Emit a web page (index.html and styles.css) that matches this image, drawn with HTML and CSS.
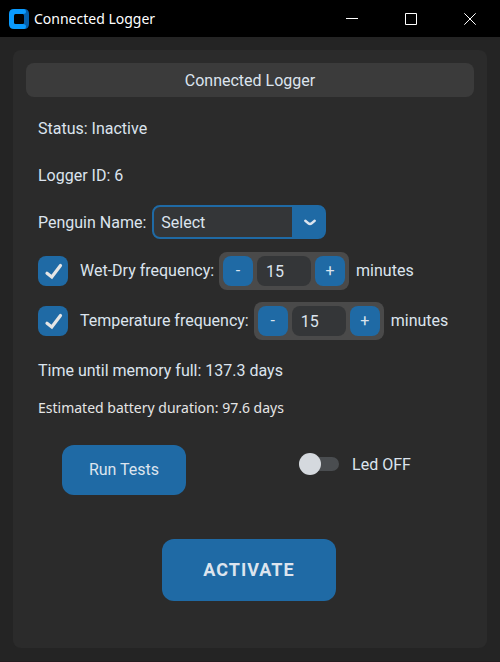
FILE: index.html
```html
<!DOCTYPE html>
<html lang="en">
<head>
<meta charset="utf-8">
<meta name="viewport" content="width=device-width, initial-scale=1">
<title>Connected Logger</title>
<link rel="stylesheet" href="styles.css">
</head>
<body>
<header class="titlebar">
  <svg class="app-icon" width="20" height="20" viewBox="0 0 20 20" aria-hidden="true">
    <path fill="#0560ac" d="M14 0H15Q20 0 20 5V15Q20 20 15 20H14Z"/>
    <path fill="#0a9bff" d="M5 0H15Q17 0 17 2.500T14 5H5ZM5 20H15Q17 20 17 17.500T14 15H5Z"/>
    <path fill="#0a9bff" d="M5 0H8V20H5Q0 20 0 15V5Q0 0 5 0Z"/>
    <rect x="5" y="5" width="10" height="10" rx="1.500" fill="#000"/>
  </svg>
  <span class="titlebar-text">Connected Logger</span>
  <div class="window-buttons">
    <button type="button" aria-label="Minimize"><svg width="12" height="12" viewBox="0 0 12 12"><path d="M0 5.500H12"/></svg></button>
    <button type="button" aria-label="Maximize"><svg width="12" height="12" viewBox="0 0 12 12"><path d="M.5 .5H11.500V11.500H.5Z"/></svg></button>
    <button type="button" aria-label="Close"><svg width="12" height="12" viewBox="0 0 12 12"><path d="M.3 .3L11.700 11.700M11.700 .3L.3 11.700"/></svg></button>
  </div>
</header>
<main class="panel">
  <h1 class="heading">Connected Logger</h1>
  <form class="settings">
    <p class="status">Status: Inactive</p>
    <p class="logger-id">Logger ID: 6</p>
    <div class="row penguin">
      <label for="penguin">Penguin Name:</label>
      <div class="select-box">
        <select id="penguin"><option>Select</option></select>
        <svg class="chevron" width="12" height="7" viewBox="0 0 12 7" aria-hidden="true"><path d="M1.300 1.800L4.300 4.200Q6 5.600 7.700 4.200L10.700 1.800"/></svg>
      </div>
    </div>
    <div class="row frequency">
      <input class="check" type="checkbox" id="wet" checked>
      <label for="wet">Wet-Dry frequency:</label>
      <div class="stepper">
        <button type="button" aria-label="Decrease wet-dry frequency">-</button>
        <input type="text" value="15" aria-label="Wet-Dry frequency in minutes">
        <button type="button" aria-label="Increase wet-dry frequency">+</button>
      </div>
      <span>minutes</span>
    </div>
    <div class="row frequency">
      <input class="check" type="checkbox" id="temp" checked>
      <label for="temp">Temperature frequency:</label>
      <div class="stepper">
        <button type="button" aria-label="Decrease temperature frequency">-</button>
        <input type="text" value="15" aria-label="Temperature frequency in minutes">
        <button type="button" aria-label="Increase temperature frequency">+</button>
      </div>
      <span>minutes</span>
    </div>
    <p class="memory">Time until memory full: 137.3 days</p>
    <p class="battery">Estimated battery duration: 97.6 days</p>
  </form>
  <div class="actions">
    <button type="button" class="run">Run Tests</button>
    <div class="led">
      <input class="switch" type="checkbox" role="switch" id="led">
      <label for="led">Led OFF</label>
    </div>
  </div>
  <button type="button" class="activate">ACTIVATE</button>
</main>
</body>
</html>
```
FILE: styles.css
```css
* {
  box-sizing: border-box;
}

body {
  margin: 0;
  min-height: 100vh;
  display: flex;
  flex-direction: column;
  background: #242424;
  border-bottom: 1px solid #241c20;
  color: #dce4ee;
  font: 16px/20px Roboto, "Liberation Sans", sans-serif;
}

h1, p {
  margin: 0;
  font-size: 16px;
  font-weight: 400;
}

button, input, select {
  margin: 0;
  padding: 0;
  border: 0;
  color: inherit;
  font: inherit;
}

.titlebar {
  display: flex;
  align-items: center;
  height: 37px;
  padding: 0 1px 0 9px;
  background: #000;
  color: #fff;
}

.titlebar-text {
  margin-left: 5px;
  font: 14px/20px "Noto Sans", "Open Sans", sans-serif;
}

.window-buttons {
  display: flex;
  margin-left: auto;
}

.window-buttons button {
  display: flex;
  align-items: center;
  justify-content: center;
  width: 59px;
  height: 36px;
  background: none;
}

.window-buttons path {
  fill: none;
  stroke: #fff;
}

.panel {
  flex: 1;
  display: flex;
  flex-direction: column;
  margin: 13px;
  padding: 13px;
  border-radius: 8px;
  background: #2b2b2b;
}

.heading {
  padding: 8px 8px 6px;
  border-radius: 8px;
  background: #3b3b3b;
  text-align: center;
}

.settings {
  padding: 22px 12px 0;
}

.logger-id {
  margin-top: 27px;
}

.row {
  display: flex;
  align-items: center;
}

.penguin {
  gap: 6px;
  margin: 19px 0 13px;
}

.select-box {
  display: grid;
  width: 174px;
  height: 34px;
}

.select-box > * {
  grid-area: 1 / 1;
}

.select-box select {
  appearance: none;
  padding: 2px 34px 0 7px;
  border: 2px solid #1f6aa5;
  border-radius: 8px;
  background: linear-gradient(to left, #1f6aa5 32px, #343638 32px);
}

.penguin label,
.led label {
  padding-top: 2px;
}

.chevron {
  place-self: center end;
  margin-right: 10px;
  pointer-events: none;
}

.chevron path {
  fill: none;
  stroke: #dce4ee;
  stroke-width: 2.4;
  stroke-linecap: round;
}

.frequency {
  margin-bottom: 12px;
}

.check {
  appearance: none;
  width: 30px;
  height: 30px;
  margin-right: 12px;
  border-radius: 8px;
  background: #3b3b3b;
}

.check:checked {
  background: #1f6aa5 url("data:image/svg+xml,%3Csvg xmlns='http://www.w3.org/2000/svg' viewBox='0 0 30 30'%3E%3Cpath d='M9 17.200L13.800 21L22.500 9.500' fill='none' stroke='%23e5e5e5' stroke-width='3.200' stroke-linecap='round'/%3E%3C/svg%3E");
}

.stepper {
  display: flex;
  align-items: center;
  gap: 4px;
  margin: 0 7px 0 5px;
  padding: 4px;
  border-radius: 8px;
  background: #4a4a4a;
}

.stepper button {
  width: 30px;
  height: 30px;
  border-radius: 8px;
  background: #1f6aa5;
}

.stepper input {
  width: 54px;
  height: 30px;
  padding: 0 9px;
  border-radius: 8px;
  background: #343638;
}

.memory {
  margin-top: 21px;
}

.battery {
  margin-top: 17px;
  color: #e5e5e5;
  font: 14px/20px "Noto Sans", "Open Sans", sans-serif;
}

.actions {
  display: grid;
  grid-template-columns: 1fr 1fr;
  align-items: start;
  margin-top: 27px;
}

.run {
  justify-self: center;
  width: 124px;
  height: 50px;
  margin-right: 28px;
  border-radius: 12px;
  background: #1f6aa5;
}

.led {
  display: flex;
  align-items: center;
  justify-self: center;
  gap: 13px;
  height: 38px;
  margin-right: 14px;
}

.switch {
  appearance: none;
  display: flex;
  align-items: center;
  width: 40px;
  height: 14px;
  border-radius: 7px;
  background: #4a4d50;
}

.switch::before {
  content: "";
  width: 22px;
  height: 22px;
  flex: none;
  border-radius: 50%;
  background: #d5d9de;
}

.switch:checked {
  justify-content: flex-end;
  background: #1f6aa5;
}

.activate {
  align-self: center;
  width: 174px;
  height: 62px;
  margin: 44px 2px 0 0;
  border-radius: 12px;
  background: #1f6aa5;
  font-size: 18px;
  font-weight: 700;
  letter-spacing: 1px;
}
```
